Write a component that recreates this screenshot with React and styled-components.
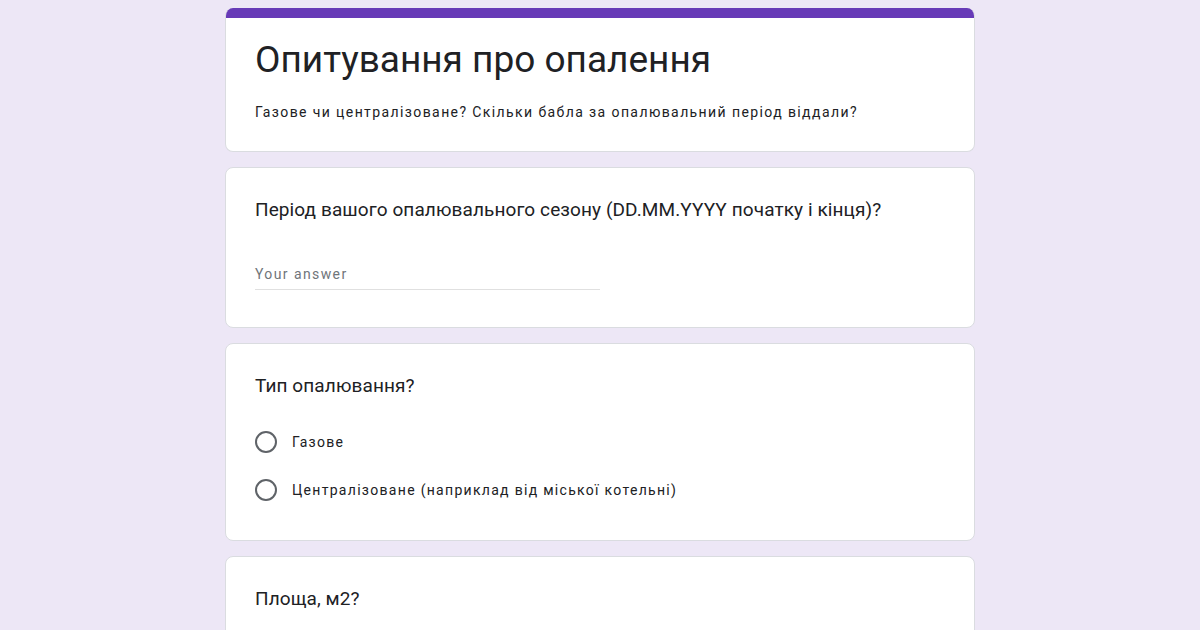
import styled, { createGlobalStyle } from "styled-components";

const Global = createGlobalStyle`
  html, body {
    margin: 0;
    background: #ede7f6;
    font-family: Roboto, "Noto Sans", Arial, sans-serif;
    color: #202124;
  }
`;

const Page = styled.div`
  width: 750px;
  margin: 0 auto;
  padding-top: 8px;
  display: flex;
  flex-direction: column;
  gap: 15px;
  height: 630px;
  overflow: hidden;
  box-sizing: border-box;
`;

const Card = styled.div`
  background: #fff;
  border: 1px solid #dadce0;
  border-radius: 8px;
  padding: 30px 29px 30px 29px;
  box-sizing: border-box;
  min-height: ${(p) => p.$h || "auto"};
  flex-shrink: 0;
`;

const HeaderCard = styled(Card)`
  border-top: none;
  position: relative;
  overflow: hidden;
  padding: 30px 29px 28px;
  &::before {
    content: "";
    position: absolute;
    left: 0;
    right: 0;
    top: 0;
    height: 10px;
    background: #673ab7;
  }
`;

const Title = styled.h1`
  margin: 0;
  font-size: 37px;
  font-weight: 400;
  line-height: 44px;
  color: #202124;
`;

const Description = styled.p`
  margin: 20px 0 0;
  font-size: 14px;
  line-height: 20px;
  letter-spacing: 1.4px;
  color: #202124;
`;

const Question = styled.div`
  font-size: 19px;
  line-height: 24px;
  letter-spacing: 0.1px;
  color: #202124;
`;

const AnswerInput = styled.div`
  margin-top: 42px;
  width: 345px;
  font-size: 14px;
  line-height: 20px;
  color: #70757a;
  letter-spacing: 1.4px;
  padding-bottom: 5px;
  border-bottom: 1px solid #e0e0e0;
`;

const Options = styled.div`
  margin-top: 33px;
  display: flex;
  flex-direction: column;
  gap: 26px;
`;

const Option = styled.label`
  display: flex;
  align-items: center;
  gap: 15px;
  font-size: 14px;
  letter-spacing: 1.3px;
  color: #202124;
`;

const Radio = styled.span`
  width: 18px;
  height: 18px;
  border: 2px solid #5f6368;
  border-radius: 50%;
  flex-shrink: 0;
`;

export default function App() {
  return (
    <>
      <Global />
      <Page>
        <HeaderCard $h="144px">
          <Title>Опитування про опалення</Title>
          <Description>
            Газове чи централізоване? Скільки бабла за опалювальний період віддали?
          </Description>
        </HeaderCard>
        <Card $h="161px">
          <Question>Період вашого опалювального сезону (DD.MM.YYYY початку і кінця)?</Question>
          <AnswerInput>Your answer</AnswerInput>
        </Card>
        <Card $h="198px">
          <Question>Тип опалювання?</Question>
          <Options>
            <Option>
              <Radio />
              Газове
            </Option>
            <Option>
              <Radio />
              Централізоване (наприклад від міської котельні)
            </Option>
          </Options>
        </Card>
        <Card $h="120px">
          <Question>Площа, м2?</Question>
        </Card>
      </Page>
    </>
  );
}
